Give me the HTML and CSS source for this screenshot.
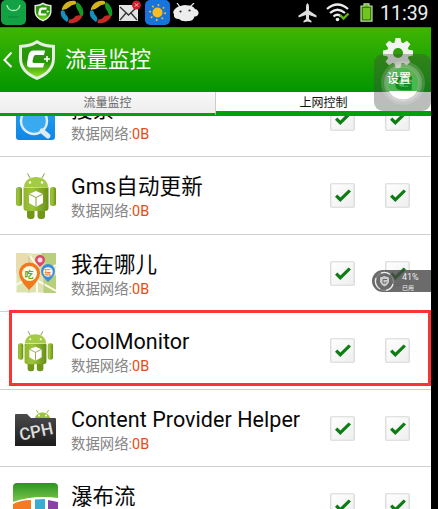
FILE: index.html
```html
<!DOCTYPE html>
<html lang="zh-CN">
<head>
<meta charset="utf-8">
<title>流量监控</title>
<link rel="stylesheet" href="styles.css">
</head>
<body>
<svg class="defs" width="0" height="0" aria-hidden="true">
  <defs>
    <linearGradient id="box" x1="0" y1="0" x2="1" y2="1"><stop offset="0" stop-color="#fff"/><stop offset="1" stop-color="#eee"/></linearGradient>
    <linearGradient id="droid" x1="0" y1="0" x2="1" y2="0"><stop offset="0" stop-color="#8fb52c"/><stop offset=".35" stop-color="#9dc53a"/><stop offset="1" stop-color="#688f16"/></linearGradient>
    <linearGradient id="shield" x1="0" y1="0" x2="0" y2="1"><stop offset="0" stop-color="#2a9d0b"/><stop offset=".55" stop-color="#279409"/><stop offset="1" stop-color="#8be022"/></linearGradient>
    <linearGradient id="blue" x1="0" y1="0" x2="0" y2="1"><stop offset="0" stop-color="#2aa5f2"/><stop offset="1" stop-color="#0f86e6"/></linearGradient>
    <linearGradient id="dark" x1="0" y1="0" x2="0" y2="1"><stop offset="0" stop-color="#4b4b4b"/><stop offset="1" stop-color="#1c1c1c"/></linearGradient>
    <linearGradient id="leaf" x1="0" y1="0" x2="0" y2="1"><stop offset="0" stop-color="#2b9420"/><stop offset="1" stop-color="#7cc74e"/></linearGradient>
  </defs>
  <symbol id="check" viewBox="0 0 25 25">
    <rect x=".75" y=".75" width="23.5" height="23.5" rx="1" fill="url(#box)" stroke="#d8d8d8" stroke-width="1.2"/>
    <path d="M5 13.8 7.3 11.4 10.4 14.4 18.6 6.4 21 8.6 10.3 19.1Z" fill="#0b7d12"/>
  </symbol>
  <symbol id="swirl" viewBox="0 0 24 24">
    <path d="M2 8.500C4 3 9 0 15 1Q17 1.500 15.500 4.500Q12 4 9.500 7Q6 10 2.500 10Q1.500 10 2 8.500Z" fill="#d3b31a"/>
    <path d="M17 2C22 5 24 10 23 15.500Q22 17 20 15.500Q19.500 12 17 9Q15 5 17 2Z" fill="#149a22"/>
    <path d="M22 17C19 22 14 24 9 23Q7.500 22 9.500 19.500Q13 19.500 15 16.500Q18 14.500 21.500 15.500Q22.500 16 22 17Z" fill="#c22a26"/>
    <path d="M7 22C2 19 0 15 1 11Q2 9.500 4.500 11Q5 14.500 7.500 16.500Q9.500 19.500 7 22Z" fill="#168fbd"/>
  </symbol>
  <symbol id="shieldlogo" viewBox="0 0 38 42">
    <path d="M19 1C24 4.500 30 5.500 37 6V19C37 30 30 36.500 19 41C8 36.500 1 30 1 19V6C8 5.500 14 4.500 19 1Z" fill="#e6ede3"/>
    <path d="M19 4.500C24 7.500 29 8.500 34 8.800V19C34 28.500 28 34 19 37.800C10 34 4 28.500 4 19V8.800C9 8.500 14 7.500 19 4.500Z" fill="url(#shield)"/>
    <path d="M27 11.500 26 16H17.500Q16 16 15.500 18L14.500 22Q14.200 24 16 24H26.500L25 28.500H12Q8.500 28 9 24L10.500 16Q11.500 11.500 15.500 11.500Z" fill="#fff"/>
    <path d="M29 17v6M26 20h6" stroke="#fff" stroke-width="1.500"/>
  </symbol>
  <symbol id="robot" viewBox="0 0 40 48">
    <path d="M14 6 11.500 1.500M26 6 28.500 1.500" stroke="#9aac76" stroke-width="1.200"/>
    <rect x="0" y="15" width="6" height="19" rx="2.500" fill="url(#droid)"/>
    <rect x="34" y="15" width="6" height="19" rx="2.500" fill="url(#droid)"/>
    <rect x="11" y="33" width="7.500" height="14" rx="3" fill="#719618"/>
    <rect x="21.500" y="33" width="7.500" height="14" rx="3" fill="#719618"/>
    <path d="M8 15C8 1.500 32 1.500 32 15Z" fill="#a3cb43"/>
    <path d="M7.500 15.600H32.500V36Q32.500 39 29 39H11Q7.500 39 7.500 36Z" fill="url(#droid)"/>
    <circle cx="14" cy="10.500" r="1.200" fill="#fff"/><circle cx="26" cy="10.500" r="1.200" fill="#fff"/>
    <path d="M20 19 27 22V31L20 35 13 31V22Z" fill="#fff"/>
    <path d="M13 22 20 25.500 27 22M20 25.500V35" stroke="#87a43f" fill="none"/>
  </symbol>
</svg>
<div class="phone">
  <div class="status">
    <div class="notices">
      <svg width="26" height="26" viewBox="0 0 26 26"><rect x="1" y="0" width="25" height="25" rx="5" fill="#12a243"/><path d="M7 5Q8 10.500 13.500 10.500T20 5" fill="none" stroke="#b8e9b8" stroke-width="1.300"/><path d="M8 17h11" stroke="#0b8434"/></svg>
      <svg class="mini" width="18" height="20"><use href="#shieldlogo"/></svg>
      <svg class="sw1" width="24" height="24"><use href="#swirl"/></svg>
      <svg class="sw2" width="24" height="24"><use href="#swirl"/></svg>
      <svg class="mail" width="24" height="22" viewBox="0 0 24 22"><rect x="1" y="5" width="19" height="16" fill="#e4e4e4"/><path d="M2 7 10.500 15 19 7M2 20 8 13M19 20 13 13" fill="none" stroke="#333" stroke-width="1.300"/><circle cx="18.500" cy="5" r="4.500" fill="#c91e2a"/><path d="M16.700 3.200l3.600 3.600m0-3.600-3.600 3.600" stroke="#f3b9bd"/></svg>
      <svg class="sun" width="25" height="25" viewBox="0 0 25 25"><rect width="25" height="25" rx="5" fill="#1674db"/><circle cx="12.500" cy="12.500" r="7.500" fill="none" stroke="#f2c332" stroke-width="2" stroke-dasharray="1.500 4.390"/><circle cx="12.500" cy="12.500" r="5" fill="#f8bd22"/></svg>
      <svg class="ghost" width="26" height="20" viewBox="0 0 26 20"><path d="M4 0 7 4Q12 1 17 4L21 0M2 4" fill="none" stroke="#ededed" stroke-width="1.200"/><path d="M2 6Q6 2 12 3Q19 1 22 6Q26 7 25.500 11Q24 14 21.500 13.500Q20 18.500 15 18Q9 19 6 16Q0 16 1 11Q-1 9 2 6Z" fill="#ededed"/><circle cx="7.500" cy="8.500" r="1.100" fill="#333"/><circle cx="16.500" cy="7.500" r="1.100" fill="#333"/></svg>
    </div>
    <div class="system">
      <svg width="19" height="20" viewBox="0 0 19 20"><path d="M9.500 0Q11 1 11 3.500V7.500L18.500 12.500V14.500L11 12V16L13.500 18V19.500L9.500 18.500 5.500 19.500V18L8 16V12L.5 14.500V12.500L8 7.500V3.500Q8 1 9.500 0Z" fill="#ddd"/></svg>
      <svg class="wifi" width="24" height="19" viewBox="0 0 24 19"><path d="M1 6Q11.500-3 22 6M4 10Q11.500 3.500 19 10M7.500 13.500Q11.500 10 15 13.500" fill="none" stroke="#eee" stroke-width="2.300"/><circle cx="11.500" cy="16.500" r="1.800" fill="#eee"/><path d="M14 12 17.500 15.500 22.500 10.500" fill="none" stroke="#5eb71d" stroke-width="2.400"/></svg>
      <svg class="battery" width="13" height="19" viewBox="0 0 13 19"><path d="M4 .8H9V3H12V18.200H1V3H4Z" fill="#6fc51d" stroke="#bad7aa" stroke-width="1.200"/><path d="M2.300 4.300H10.700V16.900H2.300Z" fill="none" stroke="#284b12" stroke-width=".8"/></svg>
      <span class="clock">11:39</span>
    </div>
  </div>
  <header class="header">
    <svg class="back" width="10" height="18" viewBox="0 0 10 18"><path d="M8.500 1.500 1.500 9 8.500 16" fill="none" stroke="#fff" stroke-width="2"/></svg>
    <svg class="logo" width="38" height="42"><use href="#shieldlogo"/></svg>
    <h1>流量监控</h1>
    <svg class="gear" width="30" height="30" viewBox="0 0 30 30"><g fill="#f1f4ef"><circle cx="15" cy="15" r="11"/><path id="tooth" d="M11.500 5 12.500 0H17.500L18.500 5V25L17.500 30H12.500L11.500 25Z"/><use href="#tooth" transform="rotate(45 15 15)"/><use href="#tooth" transform="rotate(90 15 15)"/><use href="#tooth" transform="rotate(135 15 15)"/></g><circle cx="15" cy="15" r="5" fill="#2e9e0c"/></svg>
  </header>
  <nav class="tabs"><div class="tab">流量监控</div><div class="tab active">上网控制</div></nav>
  <main class="list">
    <section class="row first">
      <div class="icon"><svg width="39" height="40" viewBox="0 0 39 40"><rect width="39" height="40" rx="3" fill="url(#blue)"/><circle cx="18" cy="21" r="13" fill="#3aaaf0" stroke="#dcebf5" stroke-width="2.400"/><path d="M26 31 32 36" stroke="#dcebf5" stroke-width="5" stroke-linecap="round"/></svg></div>
      <div class="text"><h2>搜索</h2><p>数据网络:<b>0B</b></p></div>
      <div class="checks"><svg><use href="#check"/></svg><svg><use href="#check"/></svg></div>
    </section>
    <section class="row">
      <div class="icon"><svg width="40" height="48"><use href="#robot"/></svg></div>
      <div class="text"><h2 class="gms">Gms自动更新</h2><p>数据网络:<b>0B</b></p></div>
      <div class="checks"><svg><use href="#check"/></svg><svg><use href="#check"/></svg></div>
    </section>
    <section class="row">
      <div class="icon"><svg width="40" height="40" viewBox="0 0 40 40"><rect x=".5" y=".5" width="39" height="39" fill="#dce3b0"/><path d="M0 0H12L20 9V22L8 25 0 20Z" fill="#e9dcae"/><path d="M25 0H40V14L30 12ZM28 27 40 22V40H28Z" fill="#b8cf7c"/><path d="M0 32 15 24 40 38M12 0 21 13V40M40 12 28 19" fill="none" stroke="#fff9e5" stroke-width="2"/><path d="M28 0V40M13 0V40" stroke="#b6bf87" stroke-width=".7"/><path d="M13 37Q3 27 3 20A10.500 10.500 0 0 1 24 20Q24 27 13 37Z" fill="#f07a1c"/><circle cx="13.500" cy="20.500" r="7.500" fill="#fff7e8"/><path d="M32 29Q25 23 25 18A7 7 0 0 1 39 18Q39 23 32 29Z" fill="#3d8ed8"/><circle cx="32" cy="19" r="4.800" fill="#f7f6f0"/><path d="M24 14Q19 9 19 7A5 5 0 0 1 29 7Q29 10 24 14Z" fill="#d84a69"/><circle cx="24" cy="7" r="2.500" fill="#f8dce2"/><text x="8.500" y="24.500" class="pin green">吃</text><text x="28.500" y="21.800" class="pin orange">玩</text></svg></div>
      <div class="text"><h2>我在哪儿</h2><p>数据网络:<b>0B</b></p></div>
      <div class="checks"><svg><use href="#check"/></svg><svg><use href="#check"/></svg></div>
    </section>
    <section class="row">
      <div class="icon"><svg class="small" width="35" height="42"><use href="#robot"/></svg></div>
      <div class="text"><h2>CoolMonitor</h2><p>数据网络:<b>0B</b></p></div>
      <div class="checks"><svg><use href="#check"/></svg><svg><use href="#check"/></svg></div>
    </section>
    <section class="row">
      <div class="icon"><svg width="43" height="38" viewBox="0 0 43 38"><path d="M24 4 22.500 1M33 4 34.500 1" stroke="#9dbb52"/><path d="M20.500 11C21 1 36 1 36.500 11Z" fill="#9ac43c"/><circle cx="25" cy="6.500" r="1" fill="#fff"/><circle cx="32" cy="6.500" r="1" fill="#fff"/><path d="M1 6Q1 5 2 5H13L17 9H41Q42 9 42 10V37H1Z" fill="url(#dark)"/><text x="6.500" y="32" class="cph" transform="rotate(-12 6 31)">CPH</text></svg></div>
      <div class="text"><h2 class="content">Content Provider Helper</h2><p>数据网络:<b>0B</b></p></div>
      <div class="checks"><svg><use href="#check"/></svg><svg><use href="#check"/></svg></div>
    </section>
    <section class="row last">
      <div class="icon"><svg width="45" height="45" viewBox="0 0 45 45"><rect width="45" height="45" rx="4" fill="#fff"/><path d="M0 19V4Q0 0 4 0H41Q45 0 45 4V15Q20 12 0 19Z" fill="url(#leaf)"/><path d="M0 21Q8 17 18 17V45H0Z" fill="#f47a24"/><path d="M22 16.500 32 16V45H22Z" fill="#37add1"/><path d="M35 17 45 19V45H35Z" fill="#8b42a5"/></svg></div>
      <div class="text"><h2>瀑布流</h2><p>数据网络:<b>0B</b></p></div>
      <div class="checks"><svg><use href="#check"/></svg><svg><use href="#check"/></svg></div>
    </section>
  </main>
  <div class="assist"><svg width="57" height="57" viewBox="0 0 57 57"><circle cx="29" cy="29" r="22" fill="#fff" opacity=".16"/><circle cx="29" cy="29" r="19" fill="#fff" opacity=".22"/><circle cx="29" cy="29" r="16" fill="#fff" opacity=".25"/><circle cx="29" cy="29" r="15.500" fill="#41b545" opacity=".85"/><path d="M15 37A16 16 0 0 0 43 37Z" fill="#fff"/><path d="M38 24H27Q23 24 23 30Q23 34.500 28 34.500H36V30H30" fill="none" stroke="#128a20" stroke-width="3.500"/></svg><span>设置</span></div>
  <div class="usage"><svg width="21" height="21" viewBox="0 0 21 21"><circle cx="10.500" cy="10.500" r="9" fill="none" stroke="#888" stroke-width="1.300"/><path d="M6 18A9 9 0 0 1 2 7M7 2.200A9 9 0 0 1 16 3.500M19 13A9 9 0 0 1 12 19.400" fill="none" stroke="#eee" stroke-width="1.300"/><path d="M6 6.500 10.500 5 15 6.500V11Q14 14 10.500 15.500Q7 14 6 11Z" fill="#ccc"/><path d="M13 8.500H9V12H12V10.500" fill="none" stroke="#666"/></svg><div><span>41%</span><small>已用</small></div></div>
  <div class="highlight"></div>
</div>
</body>
</html>
```
FILE: styles.css
```css
* { box-sizing: border-box; }
body { margin: 0; width: 438px; height: 509px; overflow: hidden; background: #000; font-family: Roboto, "Noto Sans CJK SC", sans-serif; }
svg { display: block; flex: none; }
.defs { position: absolute; }
.phone { position: relative; display: flex; flex-direction: column; width: 431px; height: 509px; background: #fff; overflow: hidden; }
.status { display: flex; justify-content: space-between; height: 27px; background: #000; color: #eee; }
.notices, .system { display: flex; align-items: flex-start; }
.mini { margin: 2px 0 0 8px; }
.sw1 { margin: 0 0 0 8px; }
.sw2 { margin-left: 5px; }
.mail { margin: 0 0 0 5px; }
.sun { margin-left: 3px; }
.ghost { margin: 3px 0 0 3px; }
.system { padding: 3px 2px 0 0; }
.wifi { margin-left: 9px; }
.battery { margin-left: 10px; }
.clock { margin-left: 7px; width: 49px; font-size: 19.5px; line-height: 21px; white-space: nowrap; }
.header { display: flex; align-items: center; height: 65px; padding-left: 3px; border-top: 1px solid #2d9206; background: linear-gradient(#3fb502, #029600); color: #fff; }
.logo { margin-left: 5px; }
h1 { margin: 0 0 0 9px; width: 88px; font-size: 21.5px; font-weight: 400; line-height: 28px; white-space: nowrap; }
.gear { margin: -15px 18px 0 auto; }
.tabs { display: flex; flex: none; height: 24px; }
.tab { flex: 1; height: 24px; border-right: 1px solid #ccc; border-bottom: 3px solid #00a008; background: linear-gradient(#f8f8f8, #ededed); color: #666; font-size: 12px; line-height: 23px; text-align: center; }
.active { border-right: 0; border-bottom-width: 5px; background: #fff; color: #111; }
.list { flex: 1; min-height: 0; overflow: hidden; }
.row { display: flex; height: 77.4px; border-bottom: 1px solid #d0d0d0; }
.first { margin-top: -36px; }
.icon { display: flex; align-items: center; justify-content: center; width: 71px; height: 77px; }
.first .icon { padding-top: 2px; }
.small { margin-top: 1px; }
.last .icon { padding-top: 0; }
.text { flex: 1; padding-top: 17px; }
h2 { margin: 0; height: 25px; font-size: 21.5px; line-height: 26px; font-weight: 400; color: #080808; white-space: nowrap; }
.gms { letter-spacing: .2px; }
.content { letter-spacing: .05px; }
p { margin: 0; font-size: 14.4px; line-height: 26px; color: #858585; white-space: nowrap; }
b { color: #e84a10; font-weight: 400; }
.checks { display: flex; gap: 30px; width: 101px; padding-top: 26px; }
.checks svg { width: 25px; height: 25px; }
.pin { font: 700 9px "Noto Sans CJK SC", sans-serif; }
.green { fill: #5bae1e; }
.orange { font-size: 6.5px; fill: #ed7d24; }
.cph { font: 500 17px Roboto, sans-serif; fill: #ddd; }
.assist { position: absolute; left: 374px; top: 54px; width: 57px; height: 57px; border-radius: 9px; background: rgba(70, 70, 70, .36); }
.assist span { position: absolute; left: 13px; top: 16px; color: #fff; font-size: 12px; font-weight: 500; line-height: 18px; }
.usage { position: absolute; left: 372px; top: 270px; display: flex; align-items: center; gap: 7px; width: 59px; height: 22px; padding-left: 2px; border-radius: 11px 0 0 11px; background: rgba(70, 70, 70, .8); color: #eee; }
.usage div { display: flex; flex-direction: column; }
.usage span { font-size: 9px; line-height: 12px; }
.usage small { font-size: 6px; line-height: 9px; }
.highlight { position: absolute; left: 9px; top: 310px; width: 422px; height: 76px; border: 3px solid #fa3434; }
```
